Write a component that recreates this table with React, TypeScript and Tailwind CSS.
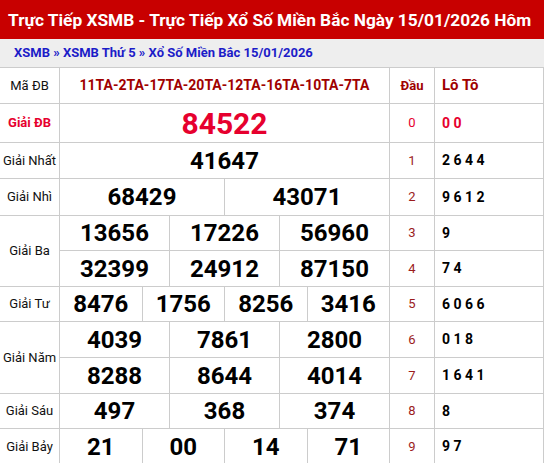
import React from "react";

const B = "border-[#cccccc]";

type Row = {
  label?: string;
  labelSpan?: boolean;
  labelRed?: boolean;
  nums: string[];
  big?: boolean;
  dau: string;
  loto: string;
  red?: boolean;
};

const rows: Row[] = [
  { label: "Giải ĐB", labelRed: true, nums: ["84522"], big: true, dau: "0", loto: "0 0", red: true },
  { label: "Giải Nhất", nums: ["41647"], dau: "1", loto: "2 6 4 4" },
  { label: "Giải Nhì", nums: ["68429", "43071"], dau: "2", loto: "9 6 1 2" },
  { label: "Giải Ba", labelSpan: true, nums: ["13656", "17226", "56960"], dau: "3", loto: "9" },
  { nums: ["32399", "24912", "87150"], dau: "4", loto: "7 4" },
  { label: "Giải Tư", nums: ["8476", "1756", "8256", "3416"], dau: "5", loto: "6 0 6 6" },
  { label: "Giải Năm", labelSpan: true, nums: ["4039", "7861", "2800"], dau: "6", loto: "0 1 8" },
  { nums: ["8288", "8644", "4014"], dau: "7", loto: "1 6 4 1" },
  { label: "Giải Sáu", nums: ["497", "368", "374"], dau: "8", loto: "8" },
  { label: "Giải Bảy", nums: ["21", "00", "14", "71"], dau: "9", loto: "9 7" },
];

export default function App() {
  return (
    <div
      className="w-[544px] h-[463px] overflow-hidden bg-white"
      style={{ fontFamily: "Roboto, 'Liberation Sans', sans-serif" }}
    >
      <div className="h-[39px] bg-[#c80000] overflow-hidden pl-[8px]">
        <div className="text-white font-bold text-[17.3px] leading-[40px] whitespace-nowrap">
          Trực Tiếp XSMB - Trực Tiếp Xổ Số Miền Bắc Ngày 15/01/2026 Hôm
        </div>
      </div>
      <div className="h-[28px] bg-[#eeeeee] flex items-center px-[14px] text-[13px] font-bold text-[#1c1cc8]">
        XSMB » XSMB Thứ 5 » Xổ Số Miền Bắc 15/01/2026
      </div>
      <div
        className={`grid grid-cols-[60px_330px_45px_109px] grid-rows-[36px_39px_36px_37px_35px_36px_35px_36px_36px_35px_36px] border-t ${B}`}
      >
        <div className={`border-r border-b ${B} flex items-center justify-center text-[13px] text-[#111]`}>
          Mã ĐB
        </div>
        <div className={`border-r border-b ${B} flex items-center justify-center text-[14px] font-bold text-[#a00000]`}>
          11TA-2TA-17TA-20TA-12TA-16TA-10TA-7TA
        </div>
        <div className={`border-r border-b ${B} flex items-center justify-center text-[13px] font-bold text-[#a00000]`}>
          Đầu
        </div>
        <div className={`border-r border-b ${B} flex items-center pl-[7px] text-[15px] font-bold text-[#a00000]`}>
          Lô Tô
        </div>
        {rows.map((r, i) => (
          <React.Fragment key={i}>
            {r.label && (
              <div
                className={`border-r border-b ${B} flex items-center justify-center text-[13px] ${
                  r.labelSpan ? "row-span-2" : ""
                } ${r.labelRed ? "text-[#e6002e] font-bold" : "text-[#111]"}`}
              >
                {r.label}
              </div>
            )}
            <div className={`border-r border-b ${B} flex`}>
              {r.nums.map((n, j) => (
                <div
                  key={j}
                  className={`flex-1 flex items-center justify-center font-bold ${
                    j > 0 ? `border-l ${B}` : ""
                  } ${r.big ? "text-[30px] text-[#e6002e]" : "text-[24px] text-[#000]"}`}
                >
                  {n}
                </div>
              ))}
            </div>
            <div
              className={`border-r border-b ${B} flex items-center justify-center text-[13px] ${
                r.red ? "text-[#e6002e]" : "text-[#9b1c1c]"
              }`}
            >
              {r.dau}
            </div>
            <div
              className={`border-r border-b ${B} flex items-center pl-[7px] text-[14px] font-bold ${
                r.red ? "text-[#e6002e]" : "text-[#000]"
              }`}
            >
              {r.loto}
            </div>
          </React.Fragment>
        ))}
      </div>
    </div>
  );
}
